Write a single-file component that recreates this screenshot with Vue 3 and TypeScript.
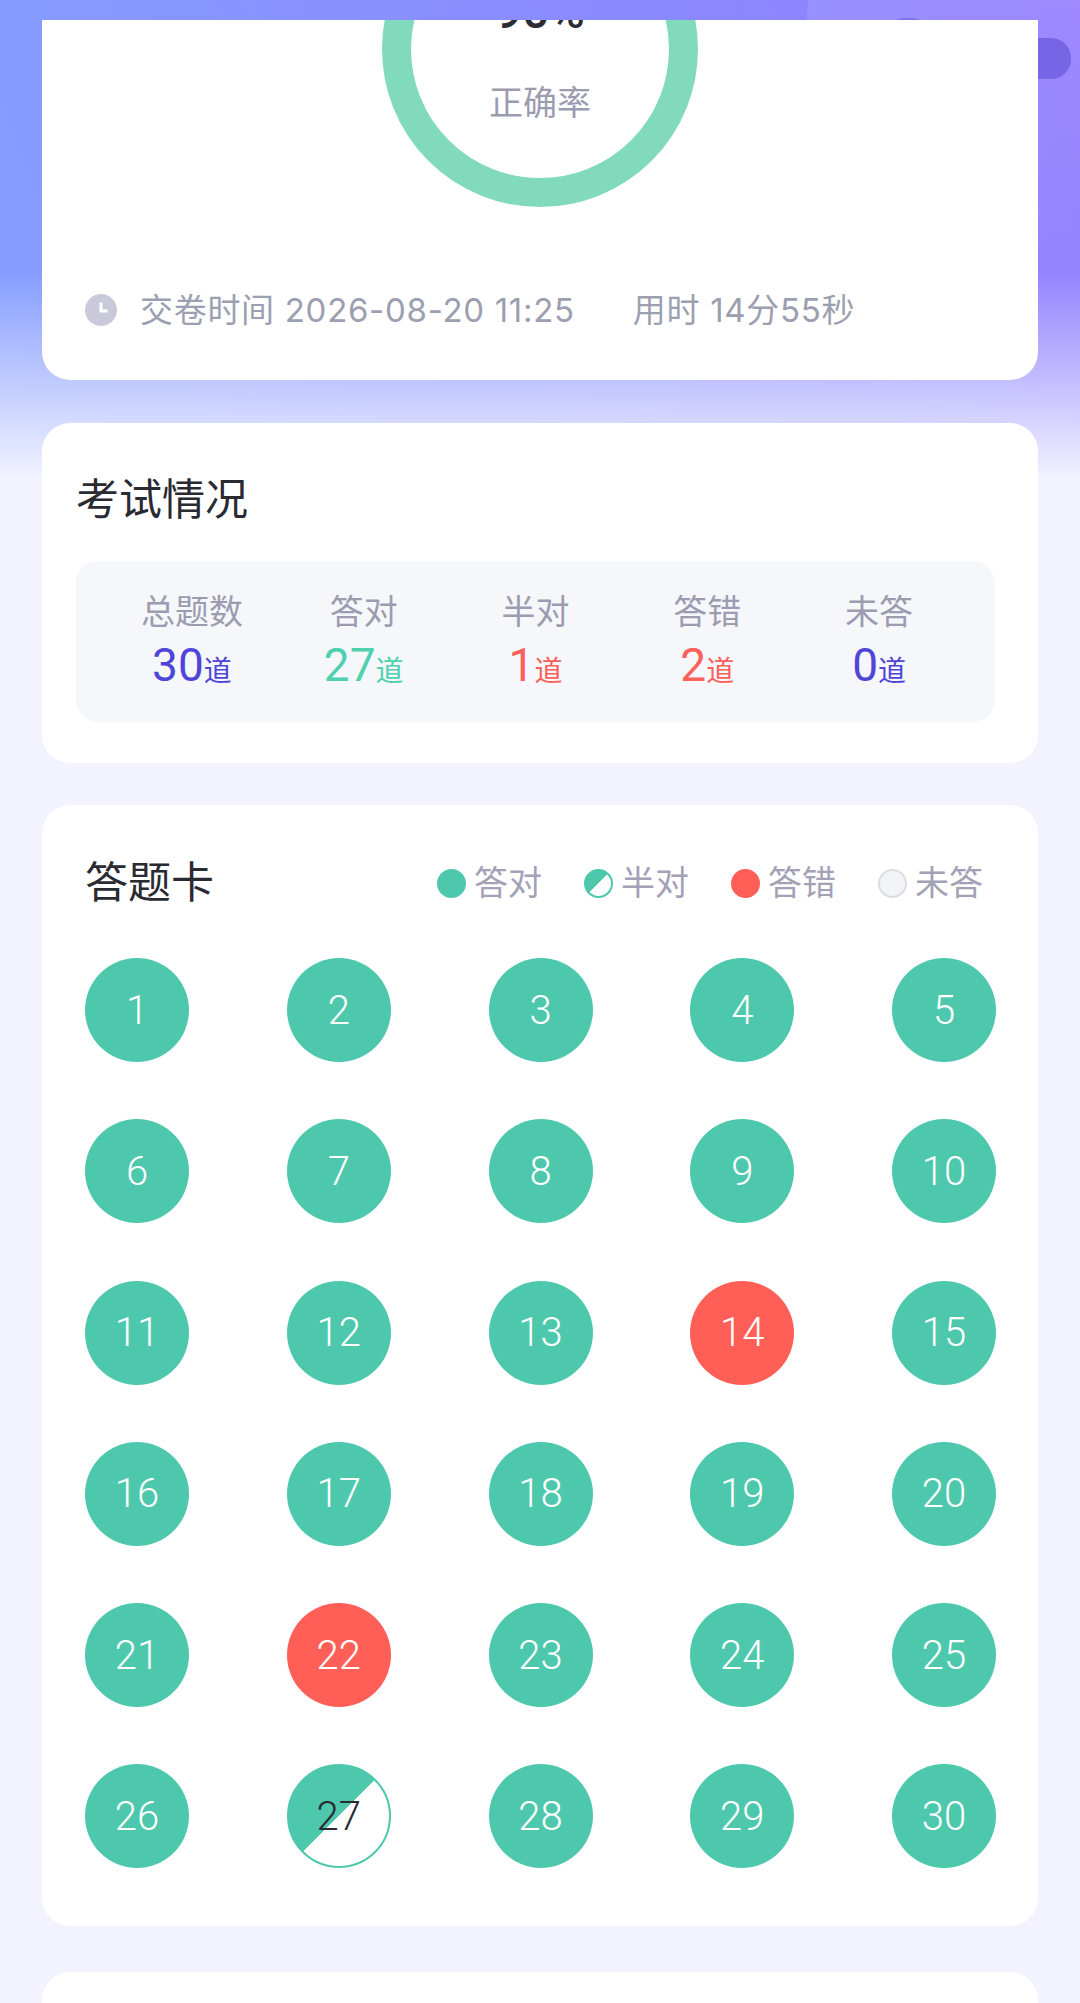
<script setup lang="ts">
type Status = 'right' | 'half' | 'wrong' | 'empty'

const stats = [
  { label: '总题数', value: 30, tone: 'indigo' },
  { label: '答对', value: 27, tone: 'green' },
  { label: '半对', value: 1, tone: 'red' },
  { label: '答错', value: 2, tone: 'red' },
  { label: '未答', value: 0, tone: 'indigo' },
]

const legend: { label: string; status: Status }[] = [
  { label: '答对', status: 'right' },
  { label: '半对', status: 'half' },
  { label: '答错', status: 'wrong' },
  { label: '未答', status: 'empty' },
]

function statusOf(no: number): Status {
  if (no === 14 || no === 22) return 'wrong'
  if (no === 27) return 'half'
  return 'right'
}

const questions = Array.from({ length: 30 }, (_, i) => ({
  no: i + 1,
  status: statusOf(i + 1),
}))
</script>

<template>
  <div class="page">
    <i class="decor decor-panel" />
    <i class="decor decor-pill" />
    <i class="decor decor-dot" />
    <div class="topbar" />

    <main class="scroll">
      <section class="card result">
        <div class="ring">
          <strong class="percent">90%</strong>
          <span class="ring-label">正确率</span>
        </div>
        <div class="time-row">
          <svg class="clock" viewBox="0 0 32 32" aria-hidden="true">
            <circle cx="16" cy="16" r="16" fill="#c9c9da" />
            <path d="M16 8.500v8.500h6.500" fill="none" stroke="#fff" stroke-width="3" />
          </svg>
          <span>交卷时间 2026-08-20 11:25</span>
          <span class="used">用时 14分55秒</span>
        </div>
      </section>

      <section class="card summary">
        <h2 class="title">考试情况</h2>
        <div class="stat-box">
          <div v-for="item in stats" :key="item.label" class="stat">
            <span class="stat-label">{{ item.label }}</span>
            <span class="stat-value" :class="item.tone">{{ item.value }}<small>道</small></span>
          </div>
        </div>
      </section>

      <section class="card sheet">
        <header class="sheet-head">
          <h2 class="title">答题卡</h2>
          <ul class="legend">
            <li v-for="item in legend" :key="item.label" class="legend-item">
              <i class="dot" :class="item.status" />
              {{ item.label }}
            </li>
          </ul>
        </header>
        <div class="grid">
          <button v-for="q in questions" :key="q.no" class="num" :class="q.status">{{ q.no }}</button>
        </div>
      </section>

      <section class="card next" />
    </main>
  </div>
</template>

<style scoped>
.page {
  position: relative;
  height: 2003px;
  overflow: hidden;
  display: flex;
  flex-direction: column;
  font-family: Roboto, "Noto Sans CJK SC", sans-serif;
  background:
    linear-gradient(180deg, rgba(242, 243, 255, 0) 270px, #f2f3ff 480px) no-repeat,
    linear-gradient(70deg, #859fff 0%, #8a88ff 68%, #947dff 100%) 0 0 / 100% 480px no-repeat,
    #f2f3ff;
}

.decor {
  position: absolute;
  display: block;
}

.decor-panel {
  left: 799px;
  top: -40px;
  width: 420px;
  height: 420px;
  border-radius: 40px 0 0 0;
  transform: skewX(-3deg);
  background: linear-gradient(180deg, rgba(255, 255, 255, 0.1), rgba(255, 255, 255, 0));
}

.decor-pill {
  left: 1000px;
  top: 38px;
  width: 71px;
  height: 41px;
  border-radius: 20px;
  background: #7865e6;
}

.decor-dot {
  left: 895px;
  top: 18px;
  width: 26px;
  height: 8px;
  border-radius: 50%;
  background: #7f6ae8;
}

.topbar {
  flex: none;
  height: 20px;
}

.scroll {
  position: relative;
  flex: 1;
  overflow: hidden;
  padding: 0 42px;
}

.card {
  background: #fff;
  border-radius: 28px;
}

.result {
  height: 360px;
  border-radius: 0 0 28px 28px;
  display: flex;
  flex-direction: column;
  align-items: center;
}

.ring {
  flex: none;
  box-sizing: border-box;
  width: 316px;
  height: 316px;
  margin-top: -129px;
  border: 29px solid #82dabd;
  border-radius: 50%;
  display: flex;
  flex-direction: column;
  align-items: center;
  padding-top: 62px;
}

.percent {
  font-size: 48px;
  line-height: 60px;
  font-weight: 500;
  color: #2c2c34;
}

.ring-label {
  margin-top: 37px;
  font-size: 34px;
  line-height: 48px;
  color: #9c9cb0;
}

.time-row {
  align-self: stretch;
  display: flex;
  align-items: center;
  margin-top: 80px;
  padding-left: 43px;
  font-family: Inter, "Noto Sans CJK SC", sans-serif;
  font-size: 33px;
  line-height: 46px;
  letter-spacing: 0.7px;
  color: #9c9fb0;
}

.clock {
  width: 32px;
  height: 32px;
  margin-right: 23px;
}

.used {
  margin-left: 58px;
}

.summary {
  margin-top: 43px;
  height: 340px;
  box-sizing: border-box;
  padding: 52px 43px 0 34px;
}

.title {
  margin: 0;
  font-size: 43px;
  line-height: 50px;
  font-weight: 400;
  color: #2a2a32;
}

.stat-box {
  margin-top: 36px;
  height: 161px;
  box-sizing: border-box;
  padding: 29px 30px 0;
  border-radius: 22px;
  background: #f6f7fb;
  display: grid;
  grid-template-columns: repeat(5, 1fr);
}

.stat {
  display: flex;
  flex-direction: column;
  align-items: center;
}

.stat-label {
  font-size: 34px;
  line-height: 44px;
  color: #9c9cb0;
}

.stat-value {
  margin-top: 5px;
  font-size: 46px;
  line-height: 52px;
}

.stat-value small {
  font-size: 28px;
}

.indigo {
  color: #4f45d6;
}

.green {
  color: #4fd0ae;
}

.red {
  color: #fb605a;
}

.sheet {
  margin-top: 42px;
  height: 1121px;
  box-sizing: border-box;
  padding: 53px 42px 0 43px;
}

.sheet-head {
  display: flex;
  justify-content: space-between;
  align-items: center;
  padding-right: 13px;
}

.legend {
  list-style: none;
  margin: 0;
  padding: 0;
  display: flex;
  gap: 42px;
}

.legend-item {
  display: flex;
  align-items: center;
  gap: 8px;
  font-size: 34px;
  line-height: 48px;
  color: #a3a1b6;
}

.dot {
  display: block;
  box-sizing: border-box;
  width: 29px;
  height: 29px;
  border-radius: 50%;
}

.dot.right {
  background: #4dc8ac;
}

.dot.half {
  border: 2px solid #4dc8ac;
  background: linear-gradient(135deg, #4dc8ac 50%, #fff 50%);
}

.dot.wrong {
  background: #ff5f57;
}

.dot.empty {
  border: 2px solid #dcdde3;
  background: #f2f4f7;
}

.grid {
  margin-top: 50px;
  display: grid;
  grid-template-columns: repeat(5, 104px);
  grid-auto-rows: 104px;
  justify-content: space-between;
  row-gap: 57.3px;
}

.num {
  box-sizing: border-box;
  width: 104px;
  height: 104px;
  padding: 0;
  border: none;
  border-radius: 50%;
  font-family: inherit;
  font-size: 40px;
  font-weight: 300;
  color: #fff;
}

.num.right {
  background: #4dc8ac;
}

.num.wrong {
  background: #ff5f57;
}

.num.half {
  border: 2px solid #4dc8ac;
  background: linear-gradient(135deg, #4dc8ac 50%, #fff 50%);
  color: #2a2a32;
}

.next {
  margin-top: 46px;
  height: 120px;
}
</style>
